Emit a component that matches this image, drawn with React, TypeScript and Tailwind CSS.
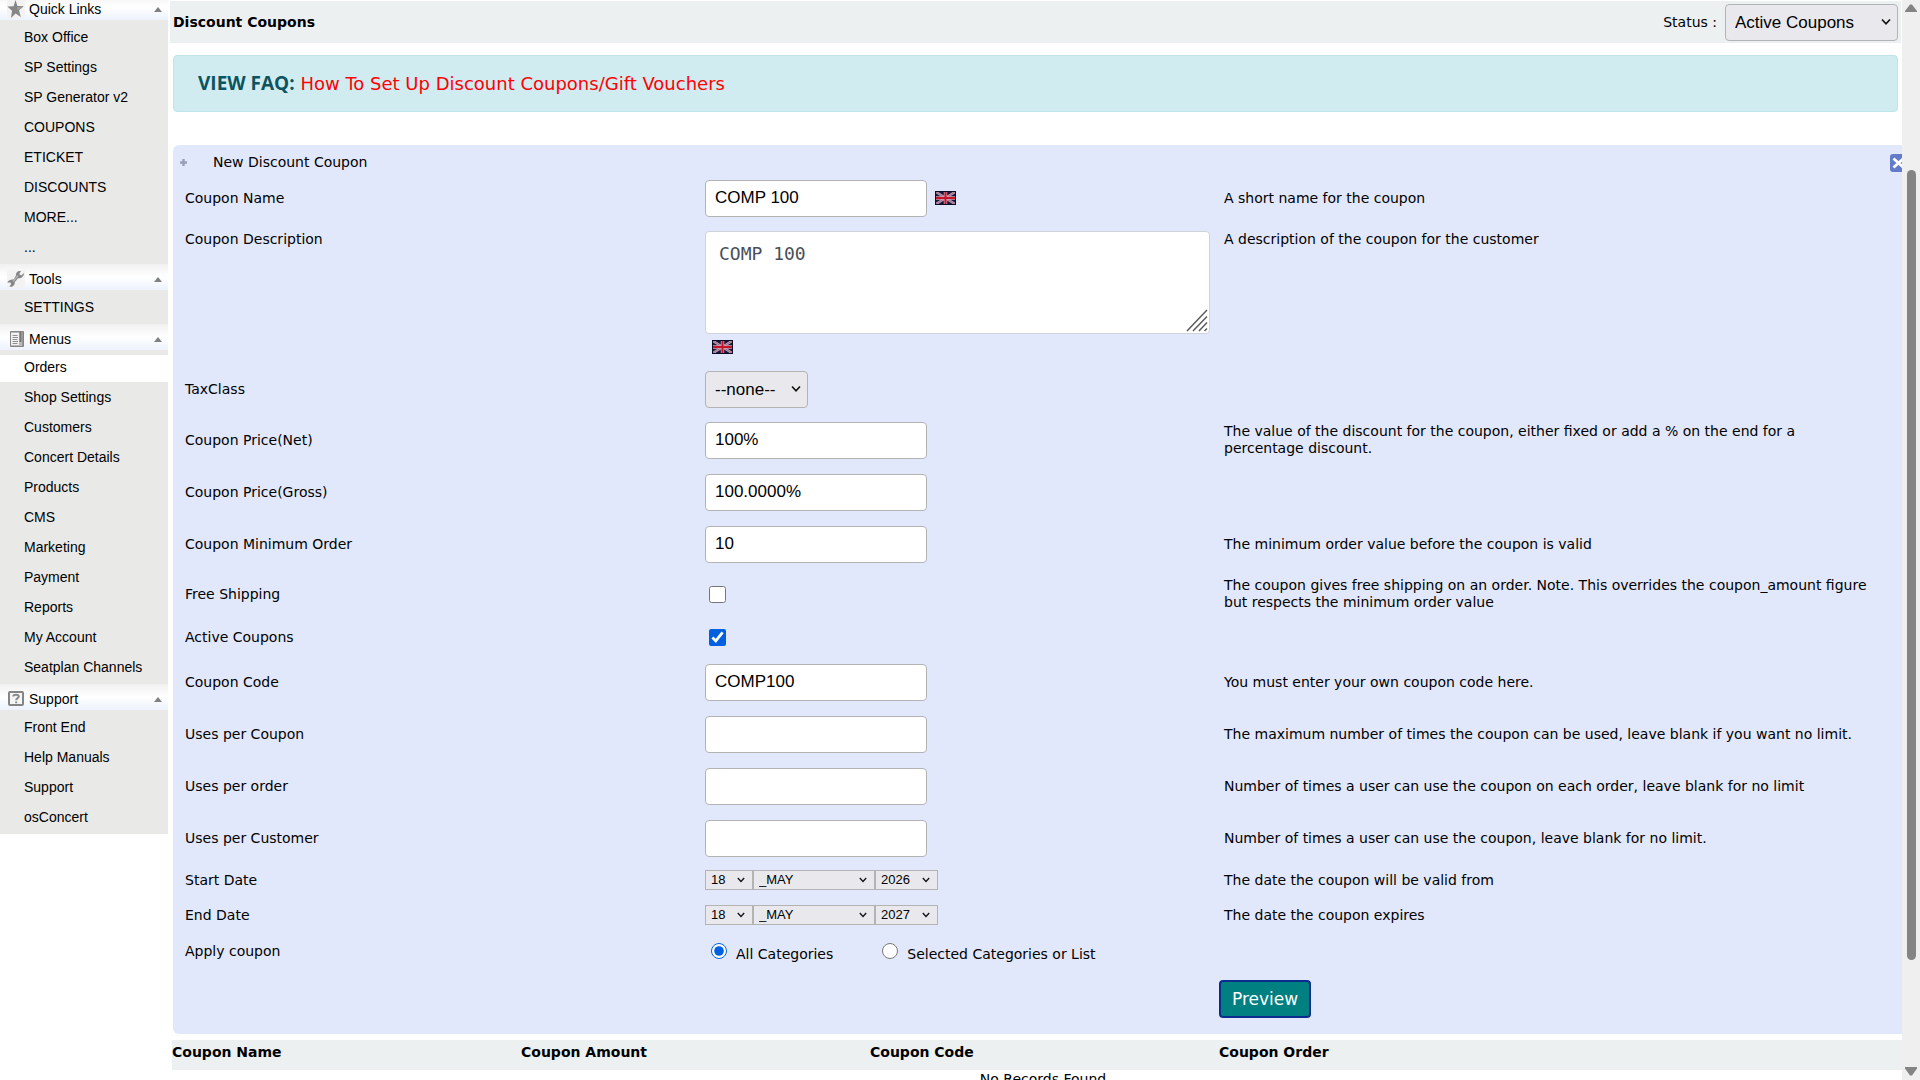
import React, { FC, ReactNode } from "react";
import clsx from "clsx";

interface MenuSection {
    title: string;
    icon: ReactNode;
    items: string[];
    active?: string;
}

const StarIcon: FC = () => (
    <svg width="18" height="18" viewBox="0 0 18 18">
        <rect width="18" height="18" fill="#f3f3f3" />
        <path
            d="M8.5 0 L10.4 6 L16.8 6.2 L12 10.2 L13.8 17 L8.6 13.4 L4 18 L5 10.8 L0.4 6.6 L6.6 6.2 Z"
            fill="#868686"
        />
        <path d="M8.5 1.5 L9.8 7 L15 7.4 L10.5 9.8 Z" fill="#a4a4a4" />
    </svg>
);

const WrenchIcon: FC = () => (
    <svg width="18" height="18" viewBox="0 0 18 18">
        <rect width="18" height="18" fill="#f3f3f3" />
        <path
            d="M14 1 C11 0.4 8.6 2.6 9 5.6 L6.6 9.6 C3 9.4 0.6 11 0.4 12.6 L3.4 12.4 L4.2 14 L2.4 16.6 C5 17.6 8 15.6 7.8 12 L11 8.2 C14 8.8 17 6.6 17 3 L14.2 5.6 L12.2 4 Z"
            fill="#868686"
        />
        <path d="M11 5.5 L6 11.5" stroke="#b5b5b5" strokeWidth="1.4" />
    </svg>
);

const MenusIcon: FC = () => (
    <svg width="18" height="18" viewBox="0 0 18 18">
        <path d="M3.5 1.5 H16.5 V16.5 H3.5 Z" fill="#b9b9b9" stroke="#858585" />
        <rect x="4" y="3" width="8" height="12" fill="#f2f2f2" />
        <path d="M5.5 5.5 H10.5 M5.5 7.5 H11 M5.5 9.5 H10.5 M5.5 11.5 H11 M5.5 13.5 H10.5" stroke="#8e8e8e" />
        <path d="M13.5 2 V12" stroke="#777" strokeWidth="2" />
        <path d="M15.5 2 V16" stroke="#9a9a9a" />
    </svg>
);

const HelpIcon: FC = () => (
    <svg width="18" height="18" viewBox="0 0 18 18">
        <rect x="2" y="2" width="14" height="13" rx="1" fill="#f5f5f5" stroke="#858585" strokeWidth="2" />
        <path
            d="M6.2 6.6 C6.2 4 11.8 4 11.8 6.6 C11.8 8.4 9.2 8 9.2 10.2 M9.2 11.4 V13.2"
            fill="none"
            stroke="#8a8a8a"
            strokeWidth="2"
        />
    </svg>
);

const FlagIcon: FC = () => (
    <svg width="21" height="14" viewBox="0 0 21 14" role="img" aria-label="English">
        <rect width="21" height="14" fill="#14183f" />
        <path d="M1 1 L20 13 M20 1 L1 13" stroke="#b99aae" strokeWidth="2.6" />
        <path d="M1 1 L20 13 M20 1 L1 13" stroke="#a8637a" strokeWidth="0.8" />
        <path d="M10.5 1 V13 M1 7 H20" stroke="#d5a3b0" strokeWidth="3.4" />
        <path d="M10.5 1 V13 M1 7 H20" stroke="#c8142a" strokeWidth="2" />
        <rect x="0.5" y="0.5" width="20" height="13" fill="none" stroke="#0b0d26" />
    </svg>
);

const Chevron: FC<{ small?: boolean }> = ({ small }) => (
    <svg
        width={small ? 8 : 10}
        height={small ? 6 : 7}
        viewBox="0 0 10 7"
        className={clsx(
            "pointer-events-none absolute top-1/2 -translate-y-1/2",
            small ? "right-2" : "right-[7px]"
        )}
    >
        <path d="M1 1 L5 5.4 L9 1" fill="none" stroke="#111" strokeWidth="1.6" />
    </svg>
);

const sections: MenuSection[] = [
    {
        title: "Quick Links",
        icon: <StarIcon />,
        items: ["Box Office", "SP Settings", "SP Generator v2", "COUPONS", "ETICKET", "DISCOUNTS", "MORE...", "..."],
    },
    { title: "Tools", icon: <WrenchIcon />, items: ["SETTINGS"] },
    {
        title: "Menus",
        icon: <MenusIcon />,
        active: "Orders",
        items: [
            "Orders",
            "Shop Settings",
            "Customers",
            "Concert Details",
            "Products",
            "CMS",
            "Marketing",
            "Payment",
            "Reports",
            "My Account",
            "Seatplan Channels",
        ],
    },
    { title: "Support", icon: <HelpIcon />, items: ["Front End", "Help Manuals", "Support", "osConcert"] },
];

const Sidebar: FC = () => (
    <nav className="-mt-[6px] w-[168px] shrink-0 font-['Liberation_Sans',Arial,sans-serif] text-sm">
        {sections.map((section) => (
            <section key={section.title}>
                <h2 className="flex h-[26px] items-center bg-linear-to-b from-[#f1f1f1] via-white via-50% to-[#edf2fd] pt-1 pr-[6px] pl-[7px]">
                    {section.icon}
                    <span className="ml-1 grow">{section.title}</span>
                    <svg width="8" height="5" viewBox="0 0 8 5">
                        <path d="M0 5 L4 0 L8 5 Z" fill="#808080" />
                    </svg>
                </h2>
                <ul className="bg-[#e9eae8] py-[2px]">
                    {section.items.map((item) => (
                        <li key={item} className="pt-[3px]">
                            <a
                                href="#"
                                className={clsx(
                                    "block h-[27px] pl-6 leading-6",
                                    item === section.active && "bg-white"
                                )}
                            >
                                {item}
                            </a>
                        </li>
                    ))}
                </ul>
            </section>
        ))}
    </nav>
);

interface RowProps {
    label: string;
    htmlFor?: string;
    help?: string;
    className: string;
    children: ReactNode;
}

const Row: FC<RowProps> = ({ label, htmlFor, help, className, children }) => (
    <div className={clsx("grid grid-cols-[520fr_519fr_678fr] pl-3", className)}>
        <label htmlFor={htmlFor}>{label}</label>
        <div>{children}</div>
        <p className="pr-7">{help}</p>
    </div>
);

const TextInput: FC<{ id: string; value?: string }> = ({ id, value }) => (
    <input
        id={id}
        type="text"
        defaultValue={value}
        className="block h-[37px] w-[222px] rounded border border-[#b3b3b3] bg-white px-[9px] font-['Liberation_Sans',Arial,sans-serif] text-[17px]"
    />
);

interface PickerProps {
    id?: string;
    label?: string;
    options: string[];
    width: string;
    small?: boolean;
}

const Picker: FC<PickerProps> = ({ id, label, options, width, small }) => (
    <div className={clsx("relative", width)}>
        <select
            id={id}
            aria-label={label}
            className={clsx(
                "block w-full appearance-none border border-[#b3b3b3] bg-[#e9e9ed] font-['Liberation_Sans',Arial,sans-serif]",
                small ? "h-5 px-[5px] text-[13px] leading-4" : "h-[37px] rounded px-[9px] text-[17px]"
            )}
        >
            {options.map((option) => (
                <option key={option}>{option}</option>
            ))}
        </select>
        <Chevron small={small} />
    </div>
);

const DatePicker: FC<{ id: string; name: string; year: string }> = ({ id, name, year }) => (
    <div className="flex">
        <Picker id={id} options={["18"]} width="w-12" small />
        <Picker label={`${name} month`} options={["_MAY"]} width="w-[122px]" small />
        <Picker label={`${name} year`} options={[year]} width="w-[63px]" small />
    </div>
);

const CouponForm: FC = () => (
    <form className="ml-[5px] rounded-l-md bg-[#e2e8fb] pb-4" onSubmit={(e) => e.preventDefault()}>
        <div className="flex h-[33px] items-center overflow-hidden pt-[2px] pl-[7px]">
            <svg width="7" height="7" viewBox="0 0 7 7">
                <path d="M3.5 0 V7 M0 3.5 H7" stroke="#98a0b8" strokeWidth="2.4" />
            </svg>
            <h2 className="ml-[26px] grow">New Discount Coupon</h2>
            <button type="button" aria-label="Close" className="-mr-[6px]">
                <svg width="18" height="18" viewBox="0 0 18 18">
                    <rect width="18" height="18" rx="3" fill="#627bcb" />
                    <path d="M3.5 4.5 L13.5 13.5 M13.5 4.5 L3.5 13.5" stroke="#fff" strokeWidth="2.8" />
                </svg>
            </button>
        </div>

        <Row label="Coupon Name" htmlFor="name" help="A short name for the coupon" className="h-10 items-center">
            <div className="flex items-center gap-2">
                <TextInput id="name" value="COMP 100" />
                <FlagIcon />
            </div>
        </Row>
        <Row
            label="Coupon Description"
            htmlFor="description"
            help="A description of the coupon for the customer"
            className="items-start pt-[13px] pb-[10px]"
        >
            <div className="relative mr-[14px]">
                <textarea
                    id="description"
                    defaultValue="COMP 100"
                    className="block h-[103px] w-full resize-none rounded border border-[#ced4da] bg-white px-[13px] py-2 font-['DejaVu_Sans_Mono',monospace] text-lg text-[#495057]"
                />
                <svg width="22" height="23" viewBox="0 0 22 23" className="pointer-events-none absolute right-[2px] bottom-[2px]">
                    <path d="M1 22 L21 1 M7 22 L21 7.5 M13 22 L21 13.5 M18.5 22 L21 19.5" stroke="#5c5c5c" strokeWidth="1.5" />
                </svg>
            </div>
            <div className="mt-[6px] pl-[7px]">
                <FlagIcon />
            </div>
        </Row>
        <Row label="TaxClass" htmlFor="tax" className="h-[50px] items-center">
            <Picker id="tax" options={["--none--"]} width="w-[103px]" />
        </Row>
        <Row
            label="Coupon Price(Net)"
            htmlFor="net"
            help="The value of the discount for the coupon, either fixed or add a % on the end for a percentage discount."
            className="h-[52px] items-center"
        >
            <TextInput id="net" value="100%" />
        </Row>
        <Row label="Coupon Price(Gross)" htmlFor="gross" className="h-[52px] items-center">
            <TextInput id="gross" value="100.0000%" />
        </Row>
        <Row
            label="Coupon Minimum Order"
            htmlFor="minimum"
            help="The minimum order value before the coupon is valid"
            className="h-[52px] items-center"
        >
            <TextInput id="minimum" value="10" />
        </Row>
        <Row
            label="Free Shipping"
            htmlFor="shipping"
            help="The coupon gives free shipping on an order. Note. This overrides the coupon_amount figure but respects the minimum order value"
            className="h-12 items-center"
        >
            <input id="shipping" type="checkbox" className="ml-1 block size-[17px] accent-[#0060df]" />
        </Row>
        <Row label="Active Coupons" htmlFor="active" className="h-[38px] items-center">
            <input id="active" type="checkbox" defaultChecked className="ml-1 block size-[17px] accent-[#0060df]" />
        </Row>
        <Row
            label="Coupon Code"
            htmlFor="code"
            help="You must enter your own coupon code here."
            className="h-[52px] items-center"
        >
            <TextInput id="code" value="COMP100" />
        </Row>
        <Row
            label="Uses per Coupon"
            htmlFor="usesCoupon"
            help="The maximum number of times the coupon can be used, leave blank if you want no limit."
            className="h-[52px] items-center"
        >
            <TextInput id="usesCoupon" />
        </Row>
        <Row
            label="Uses per order"
            htmlFor="usesOrder"
            help="Number of times a user can use the coupon on each order, leave blank for no limit"
            className="h-[52px] items-center"
        >
            <TextInput id="usesOrder" />
        </Row>
        <Row
            label="Uses per Customer"
            htmlFor="usesCustomer"
            help="Number of times a user can use the coupon, leave blank for no limit."
            className="h-[52px] items-center"
        >
            <TextInput id="usesCustomer" />
        </Row>
        <Row label="Start Date" htmlFor="start" help="The date the coupon will be valid from" className="h-8 items-center">
            <DatePicker id="start" name="Start" year="2026" />
        </Row>
        <Row label="End Date" htmlFor="end" help="The date the coupon expires" className="h-[38px] items-center">
            <DatePicker id="end" name="End" year="2027" />
        </Row>
        <Row label="Apply coupon" htmlFor="all" className="h-[34px] items-center">
            <div className="flex items-start pt-1 pl-[6px]">
                <input id="all" type="radio" name="apply" defaultChecked className="size-4 accent-[#0060df]" />
                <label htmlFor="all" className="mt-[3px] ml-[9px]">
                    All Categories
                </label>
                <input id="selected" type="radio" name="apply" className="ml-[49px] size-4 accent-[#0060df]" />
                <label htmlFor="selected" className="mt-[3px] ml-[9px]">
                    Selected Categories or List
                </label>
            </div>
        </Row>

        <div className="grid grid-cols-[520fr_519fr_678fr] pt-3 pl-3">
            <button
                type="submit"
                className="col-start-3 -ml-[5px] h-[38px] justify-self-start rounded border-2 border-[#0a2c8c] bg-[#008080] px-[11px] text-[17px] text-white"
            >
                Preview
            </button>
        </div>
    </form>
);

const Scrollbar: FC = () => (
    <div className="flex w-[18px] shrink-0 flex-col items-center bg-[#efefef] pt-1 pb-1" aria-hidden="true">
        <svg width="12" height="8" viewBox="0 0 12 8">
            <path d="M0 8 V7 L5 0.5 H7 L12 7 V8 Z" fill="#848484" />
        </svg>
        <div className="flex w-full grow flex-col items-center">
            <div className="grow-[158]" />
            <div className="w-[9px] grow-[790] rounded-full bg-[#848484]" />
            <div className="grow-[107]" />
        </div>
        <svg width="12" height="9" viewBox="0 0 12 9">
            <path d="M0 0 H12 V1.5 L7 8.5 H5 L0 1.5 Z" fill="#848484" />
        </svg>
    </div>
);

const App: FC = () => (
    <div className="flex h-screen overflow-hidden bg-white font-['DejaVu_Sans',Verdana,sans-serif] text-sm leading-[17px] text-black">
        <Sidebar />
        <main className="min-w-0 grow overflow-hidden">
            <header className="mt-px mr-px ml-[2px] flex h-[42px] items-center bg-[#ecf0f1] pr-[3px] pl-[3px]">
                <h1 className="grow font-bold">Discount Coupons</h1>
                <label htmlFor="status" className="mr-2">
                    Status :
                </label>
                <Picker id="status" options={["Active Coupons"]} width="w-[173px]" />
            </header>

            <p className="mt-3 mr-1 mb-[33px] ml-[5px] rounded border border-[#bee5eb] bg-[#d1ecf1] px-6 py-[14px] text-lg leading-[27px]">
                <strong className="font-['Open_Sans',sans-serif] text-[19px] text-[#0c5460]">VIEW FAQ:</strong>{" "}
                <a href="#" className="text-[#ff0000]">
                    How To Set Up Discount Coupons/Gift Vouchers
                </a>
            </p>

            <CouponForm />

            <table className="mt-[6px] ml-1 w-full table-fixed">
                <thead>
                    <tr className="h-[30px] bg-[#ecf0f1] text-left">
                        <th className="w-[349px] pb-[6px]">Coupon Name</th>
                        <th className="w-[349px] pb-[6px]">Coupon Amount</th>
                        <th className="w-[349px] pb-[6px]">Coupon Code</th>
                        <th className="pb-[6px]">Coupon Order</th>
                    </tr>
                </thead>
                <tbody>
                    <tr>
                        <td colSpan={4} className="pt-px pl-2 text-center">
                            No Records Found
                        </td>
                    </tr>
                </tbody>
            </table>
        </main>
        <Scrollbar />
    </div>
);

export default App;
